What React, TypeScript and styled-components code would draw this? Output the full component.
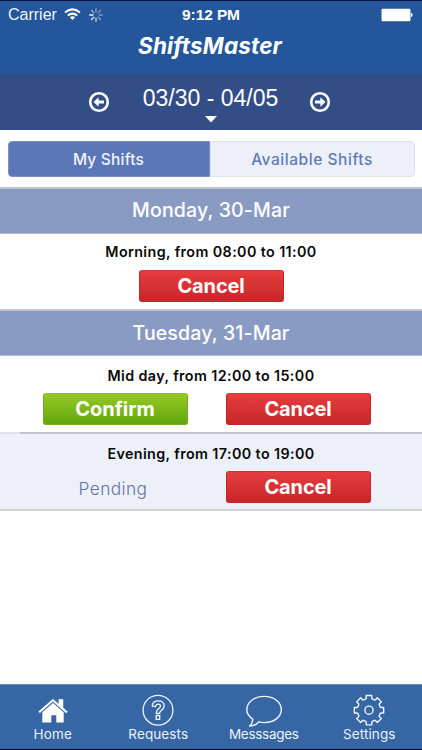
import React from 'react';
import styled, { createGlobalStyle } from 'styled-components';

const Global = createGlobalStyle`
  * { box-sizing: border-box; }
  body { margin: 0; background: #fff; }
  svg { display: block; flex: none; }
`;

const Screen = styled.div`
  width: 422px;
  height: 750px;
  display: flex;
  flex-direction: column;
  overflow: hidden;
  background: #fff;
  font-family: Inter, sans-serif;
  border-top: 1px solid #0d1545;
  border-bottom: 1px solid #050b1e;
`;

const Header = styled.header`
  height: 73px;
  flex: none;
  background: #23569a;
  border-bottom: 1px solid #245a9f;
  color: #fff;
`;

const StatusBar = styled.div`
  height: 27px;
  display: grid;
  grid-template-columns: 1fr auto 1fr;
  align-items: center;
  padding: 0 8px;
  font: 16px/27px "Liberation Sans", sans-serif;
`;

const Carrier = styled.div`
  display: flex;
  align-items: center;
  color: #edf3fa;
  svg:first-of-type { margin-left: 7px; }
  svg:last-of-type { margin-left: 8px; }
`;

const Clock = styled.div`
  font-weight: bold;
  font-size: 15.5px;
  letter-spacing: -0.1px;
`;

const BatterySlot = styled.div`
  display: flex;
  justify-content: flex-end;
  padding-right: 1px;
`;

const Logo = styled.h1`
  margin: 4px 2px 0 0;
  text-align: center;
  font-size: 22.5px;
  line-height: 27px;
  font-weight: 700;
  font-style: italic;
  letter-spacing: 0.15px;
`;

const DateBar = styled.div`
  height: 56px;
  flex: none;
  display: flex;
  justify-content: center;
  padding-right: 4px;
  background: #334e87;
  border-top: 1px solid #2d4c88;
  color: #fff;
`;

const RoundButton = styled.button`
  display: flex;
  border: 0;
  padding: 16px 0 0;
  width: 22px;
  height: 40px;
  background: none;
  color: #fff;
`;

const Range = styled.div`
  width: 199px;
  display: flex;
  flex-direction: column;
  align-items: center;
  padding: 9px 0 0 3px;
  font: 23px/28px "Liberation Sans", sans-serif;
  svg { margin-top: 4px; }
`;

const Switcher = styled.div`
  height: 57px;
  flex: none;
  padding: 11px 7px 10px 8px;
  display: flex;
`;

const Segment = styled.button<{ $active?: boolean }>`
  width: ${p => (p.$active ? 202 : 205)}px;
  height: 36px;
  padding: 0 1px 0 0;
  border: 1px solid ${p => (p.$active ? '#7791c8' : '#dce3ed')};
  border-radius: ${p => (p.$active ? '4px 0 0 4px' : '0 4px 4px 0')};
  background: ${p => (p.$active ? '#5b77b7' : '#edf0f8')};
  color: ${p => (p.$active ? '#f0f4fc' : '#607bb9')};
  font: 500 15.5px/36px Inter, sans-serif;
  letter-spacing: ${p => (p.$active ? 0.2 : 0.55)}px;
`;

const DayHeader = styled.h2<{ $drop?: number }>`
  height: 47px;
  flex: none;
  margin: 0;
  border-top: 2px solid #c1c3ce;
  border-bottom: 1px solid #b5b9ce;
  background: #8a9bc3;
  color: #fff;
  text-align: center;
  font-size: 19.5px;
  line-height: ${p => 43 + (p.$drop ?? 0)}px;
  font-weight: 500;
  letter-spacing: 0.15px;
`;

const Shift = styled.section<{ $height: number; $top: number; $tinted?: boolean }>`
  height: ${p => p.$height}px;
  flex: none;
  padding-top: ${p => p.$top}px;
  background: ${p => (p.$tinted ? '#edf0f8' : '#fff')};
`;

const ShiftTime = styled.div`
  height: 18px;
  text-align: center;
  color: #090909;
  font-size: 14.3px;
  line-height: 18px;
  font-weight: 600;
  letter-spacing: 0.4px;
`;

const Actions = styled.div<{ $pair?: boolean }>`
  display: flex;
  justify-content: center;
  gap: 38px;
  margin-top: ${p => (p.$pair ? 8 : 9)}px;
  padding-right: ${p => (p.$pair ? 9 : 0)}px;
`;

const Action = styled.button<{ $green?: boolean }>`
  width: 145px;
  height: 32px;
  padding: 0;
  border: 1px solid ${p => (p.$green ? '#75aa22' : '#bd272a')};
  border-top-color: ${p => (p.$green ? '#8cbf28' : '#d23235')};
  border-radius: 3px;
  background: ${p => (p.$green ? 'linear-gradient(#96c925, #62a70c)' : 'linear-gradient(#e63d3e, #c82629)')};
  color: #fff;
  font: 700 20px/31px Inter, sans-serif;
  letter-spacing: ${p => (p.$green ? 0 : -0.15)}px;
`;

const Pending = styled.div`
  width: 145px;
  height: 32px;
  text-align: center;
  padding-right: 4px;
  color: #6075a8;
  font-size: 17.3px;
  line-height: 36px;
  font-weight: 300;
  letter-spacing: 0.4px;
`;

const Divider = styled.div<{ $inset?: boolean }>`
  height: 2px;
  flex: none;
  background: ${p => (p.$inset ? 'linear-gradient(90deg, #e0e2ea 20px, #c1c3cd 20px)' : '#cfd0d6')};
`;

const TabBar = styled.nav`
  height: 65px;
  flex: none;
  margin-top: auto;
  display: grid;
  grid-template-columns: repeat(4, 1fr);
  background: #3766a5;
  border-top: 1px solid #6c8bb5;
`;

const Tab = styled.a<{ $spacing?: number }>`
  display: flex;
  flex-direction: column;
  align-items: center;
  padding-top: 9px;
  color: #e9f1fa;
  font-size: 13.5px;
  line-height: 16px;
  letter-spacing: ${p => p.$spacing ?? 0.1}px;
  svg { margin-bottom: -1px; }
`;

const Arrow = ({ right }: { right?: boolean }) => (
  <svg width="22" height="22" viewBox="0 0 22 22">
    <circle cx="11" cy="11" r="8.8" fill="none" stroke="#fff" strokeWidth="2.6" />
    <path
      d="M5.5 11 10.6 6.2V9.5H16v3h-5.4v3.3z"
      fill="#fff"
      transform={right ? 'rotate(180 11 11)' : undefined}
    />
  </svg>
);

const Wifi = () => (
  <svg width="17" height="13" viewBox="0 0 17 13" fill="none" stroke="#fff" strokeWidth="2">
    <path d="M1 4.6Q8.5-1.8 16 4.6M3.8 7.6Q8.5 3.7 13.2 7.6" />
    <path d="M5.8 9.3Q8.5 7.2 11.2 9.3L8.5 12z" fill="#fff" stroke="none" />
  </svg>
);

const Spinner = () => (
  <svg width="14" height="14" viewBox="0 0 14 14" stroke="#fff" strokeWidth="1.4" strokeLinecap="round">
    {[0.4, 0.4, 0.4, 0.45, 0.7, 0.85, 0.95, 0.55].map((o, i) => (
      <path key={i} d="M7 .8v3.2" opacity={o} transform={`rotate(${i * 45} 7 7)`} />
    ))}
  </svg>
);

const Battery = () => (
  <svg width="33" height="14" viewBox="0 0 33 14" fill="#fff">
    <rect x="1.5" y=".8" width="29" height="12.5" rx="1.2" />
    <path d="M31 4.8q1.6.6 1.6 2.2t-1.6 2.2z" />
  </svg>
);

const HomeIcon = () => (
  <svg width="32" height="33" viewBox="0 0 32 33" fill="#fff">
    <path d="M5.3 18.2 16 9l10.7 9.2v10.2h-7.4v-7.2h-5v7.2h-9z" />
    <path d="M1.2 17.5 15.9 4.7l5.5 4.8V5h5v8.8l4.4 3.8-1.5 1.8L15.9 7.8 2.8 19.3z" stroke="#3766a5" strokeWidth=".4" />
  </svg>
);

const QuestionIcon = () => (
  <svg width="32" height="33" viewBox="0 0 32 33" fill="none" stroke="#eef4fb" strokeWidth="1.3">
    <circle cx="16" cy="16.2" r="14.9" />
    <path d="M10.2 12.1C10.4 8.5 13 6.8 16.2 6.8c3.5 0 5.9 1.9 5.9 5 0 2.6-1.4 3.8-3.1 5-1 .8-1.4 1.3-1.4 2.7h-3.3v-1.1c0-1.7.9-2.7 2.5-3.9 1.2-.9 1.7-1.4 1.7-2.5 0-1.2-1-1.9-2.3-1.9-1.6 0-2.5.9-2.7 2.5z" strokeLinejoin="round" />
    <path d="M14.2 21.7h3.5v3.6h-3.5z" />
  </svg>
);

const ChatIcon = () => (
  <svg width="38" height="33" viewBox="0 0 38 33" fill="none" stroke="#eef4fb" strokeWidth="1.4">
    <path d="M7.8 25.1C4.2 22.8 1.8 19.7 1.8 15.8 1.8 8.2 9.1 2.4 19.1 2.4c9.9 0 17.2 5.8 17.2 13.2 0 7.5-7.2 13-17 13-2 0-3.8-.3-5.4-.8-2.5 3.1-5.4 4.3-9.3 4.2 2.2-1.9 3.2-4 3.2-6.9z" strokeLinejoin="round" />
  </svg>
);

const teeth = Array.from({ length: 8 }, (_, i) => {
  const at = (deg: number, r: number) => {
    const a = ((i * 45 + deg) * Math.PI) / 180;
    return `${(16 + r * Math.sin(a)).toFixed(2)} ${(16.2 - r * Math.cos(a)).toFixed(2)}`;
  };
  return `${i ? 'L' : 'M'}${at(-17, 11.6)}L${at(-13, 12.2)}L${at(-11, 14.9)}L${at(11, 14.9)}L${at(13, 12.2)}L${at(17, 11.6)}`;
}).join('') + 'Z';

const GearIcon = () => (
  <svg width="32" height="33" viewBox="0 0 32 33" fill="none" stroke="#eef4fb" strokeWidth="1.4" strokeLinejoin="round">
    <path d={teeth} />
    <circle cx="16" cy="16.2" r="4.1" />
  </svg>
);

export default function App() {
  return (
    <>
      <Global />
      <Screen>
        <Header>
          <StatusBar>
            <Carrier>Carrier<Wifi /><Spinner /></Carrier>
            <Clock>9:12 PM</Clock>
            <BatterySlot><Battery /></BatterySlot>
          </StatusBar>
          <Logo>ShiftsMaster</Logo>
        </Header>
        <DateBar>
          <RoundButton aria-label="Previous week"><Arrow /></RoundButton>
          <Range>
            03/30 - 04/05
            <svg width="12" height="7" viewBox="0 0 12 7"><path d="M0 0h12L6 6.5z" fill="#fff" /></svg>
          </Range>
          <RoundButton aria-label="Next week"><Arrow right /></RoundButton>
        </DateBar>
        <Switcher>
          <Segment $active>My Shifts</Segment>
          <Segment>Available Shifts</Segment>
        </Switcher>
        <DayHeader>Monday, 30-Mar</DayHeader>
        <Shift $height={75} $top={9}>
          <ShiftTime>Morning, from 08:00 to 11:00</ShiftTime>
          <Actions><Action>Cancel</Action></Actions>
        </Shift>
        <DayHeader $drop={2}>Tuesday, 31-Mar</DayHeader>
        <Shift $height={76} $top={11}>
          <ShiftTime>Mid day, from 12:00 to 15:00</ShiftTime>
          <Actions $pair><Action $green>Confirm</Action><Action>Cancel</Action></Actions>
        </Shift>
        <Divider $inset />
        <Shift $height={75} $top={11} $tinted>
          <ShiftTime>Evening, from 17:00 to 19:00</ShiftTime>
          <Actions $pair><Pending>Pending</Pending><Action>Cancel</Action></Actions>
        </Shift>
        <Divider />
        <TabBar>
          <Tab $spacing={0.2}><HomeIcon />Home</Tab>
          <Tab><QuestionIcon />Requests</Tab>
          <Tab $spacing={-0.3}><ChatIcon />Messsages</Tab>
          <Tab><GearIcon />Settings</Tab>
        </TabBar>
      </Screen>
    </>
  );
}
